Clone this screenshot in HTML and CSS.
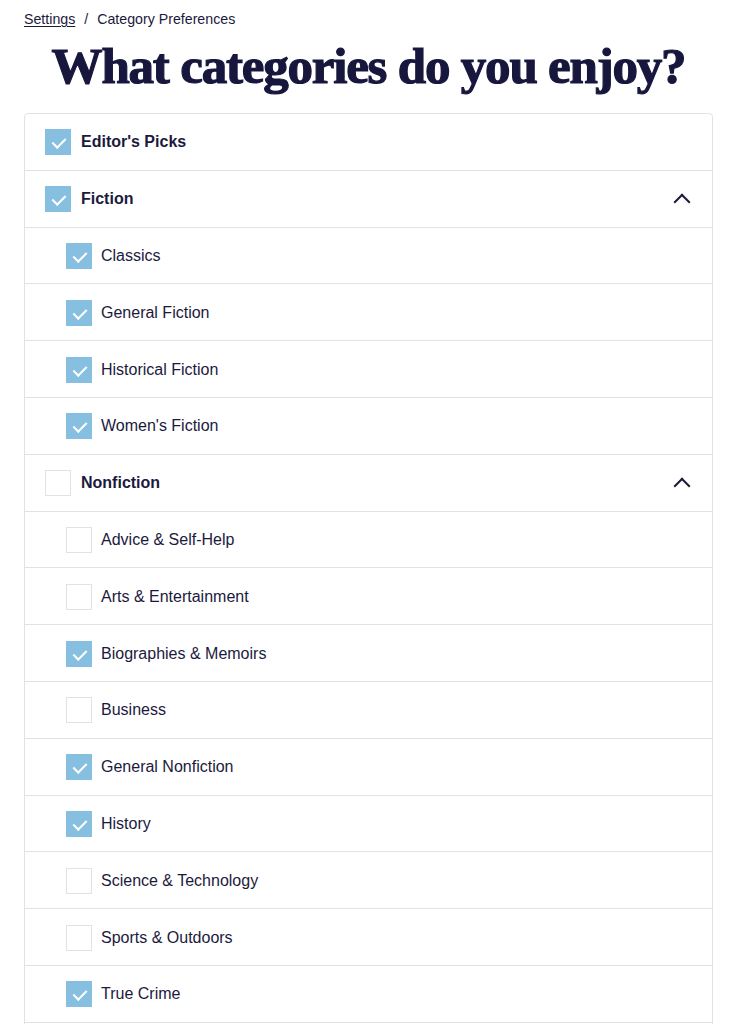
FILE: index.html
```html
<!DOCTYPE html>
<html>
<head>
<meta charset="utf-8">
<link rel="stylesheet" href="styles.css">
</head>
<body>
<div class="page">
  <nav class="crumbs"><a href="#">Settings</a><span class="sep">/</span><span>Category Preferences</span></nav>
  <h1 class="title">What categories do you enjoy?</h1>
  <div class="list">
    <div class="row parent"><span class="cb on"></span><span class="label">Editor's Picks</span></div>
    <div class="row parent"><span class="cb on"></span><span class="label">Fiction</span><span class="chev"></span></div>
    <div class="row child"><span class="cb on"></span><span class="label">Classics</span></div>
    <div class="row child"><span class="cb on"></span><span class="label">General Fiction</span></div>
    <div class="row child"><span class="cb on"></span><span class="label">Historical Fiction</span></div>
    <div class="row child"><span class="cb on"></span><span class="label">Women's Fiction</span></div>
    <div class="row parent"><span class="cb"></span><span class="label">Nonfiction</span><span class="chev"></span></div>
    <div class="row child"><span class="cb"></span><span class="label">Advice &amp; Self-Help</span></div>
    <div class="row child"><span class="cb"></span><span class="label">Arts &amp; Entertainment</span></div>
    <div class="row child"><span class="cb on"></span><span class="label">Biographies &amp; Memoirs</span></div>
    <div class="row child"><span class="cb"></span><span class="label">Business</span></div>
    <div class="row child"><span class="cb on"></span><span class="label">General Nonfiction</span></div>
    <div class="row child"><span class="cb on"></span><span class="label">History</span></div>
    <div class="row child"><span class="cb"></span><span class="label">Science &amp; Technology</span></div>
    <div class="row child"><span class="cb"></span><span class="label">Sports &amp; Outdoors</span></div>
    <div class="row child"><span class="cb on"></span><span class="label">True Crime</span></div>
    <div class="row spacer"></div>
  </div>
</div>
</body>
</html>
```

FILE: styles.css
```css
* { box-sizing: border-box; }
html, body { margin: 0; padding: 0; background: #fff; }
body { font-family: "Liberation Sans", Arial, sans-serif; color: #1b1a3d; overflow: hidden; height: 1024px; }
.page { padding: 10px 22px 0 24px; }
.crumbs { font-size: 14.2px; line-height: 18px; color: #1b1a3d; }
.crumbs a { color: #1b1a3d; text-decoration: underline; text-underline-offset: 2px; }
.crumbs .sep { margin: 0 9px; }
.title {
  margin: 9px 0 0;
  text-align: center;
  white-space: nowrap;
  font-family: "Liberation Serif", "Times New Roman", serif;
  font-weight: 900;
  font-size: 51px;
  line-height: 58px;
  color: #17163d;
  letter-spacing: -1.2px;
  -webkit-text-stroke: 1.2px #17163d;
}
.list {
  margin-top: 18px;
  border: 1px solid #e2e1ea;
  border-radius: 4px;
}
.row {
  height: 56.8px;
  display: flex;
  align-items: center;
  border-bottom: 1px solid #e2e1ea;
  font-size: 16px;
  padding-top: 1px;
}
.row.parent { padding-left: 20px; font-weight: bold; }
.row.child { padding-left: 41px; }
.cb {
  width: 26px; height: 26px;
  border: 1px solid #e2e1ea;
  flex: none;
  position: relative;
  background: #fff;
}
.cb.on { background: #87bfe0; border-color: #87bfe0; }
.cb.on::after {
  content: "";
  position: absolute;
  left: 8.5px; top: 5px;
  width: 6px; height: 11px;
  border: solid #fff;
  border-width: 0 2px 2px 0;
  transform: rotate(45deg);
}
.label { margin-left: 10px; flex: 1; }
.row.child .label { margin-left: 9px; }
.chev {
  width: 12px; height: 12px;
  border: solid #1b1a3d;
  border-width: 2px 0 0 2px;
  transform: rotate(45deg);
  margin-right: 24px;
  margin-top: 6px;
}
```
